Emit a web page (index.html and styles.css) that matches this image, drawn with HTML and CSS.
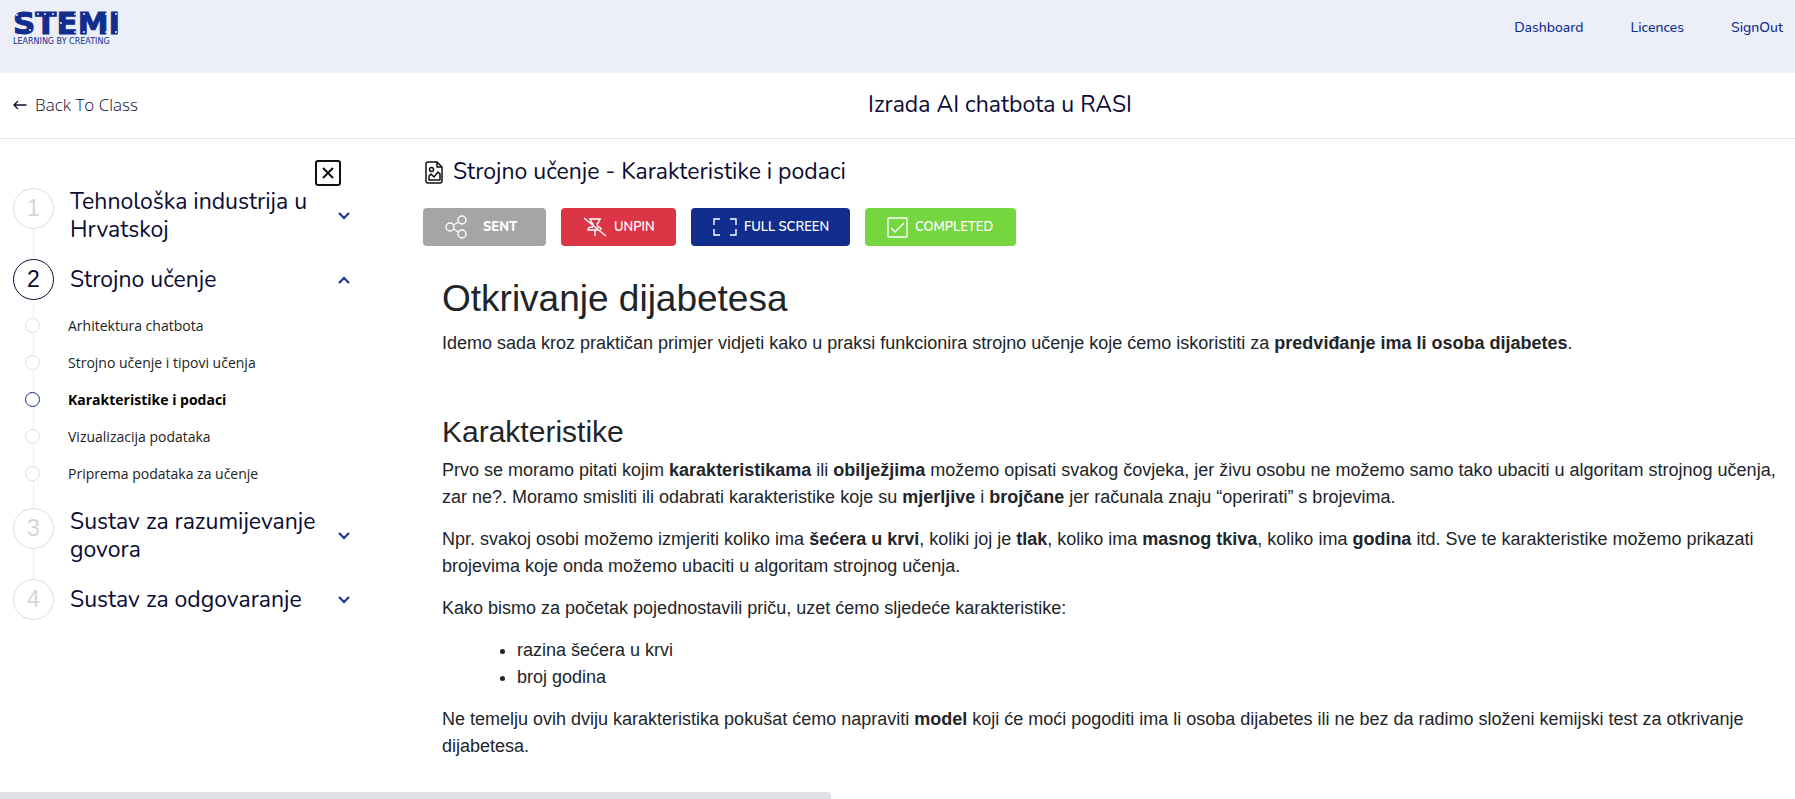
FILE: index.html
```html
<!DOCTYPE html>
<html lang="hr">
<head>
  <meta charset="UTF-8">
  <meta name="viewport" content="width=device-width, initial-scale=1.0">
  <title>Izrada AI chatbota u RASI</title>
  <link rel="stylesheet" href="styles.css">
</head>
<body>
  <header class="header">
    <a class="logo" href="#" aria-label="STEMI">
      <svg width="112" height="40" viewBox="0 0 112 40">
        <text class="logo-name" x="0" y="25">STEMI</text>
        <text class="logo-tag" x="0" y="35">LEARNING BY CREATING</text>
        <g fill="#eceff7">
          <circle cx="4" cy="6" r="1"/>
          <circle cx="17" cy="21" r="1"/>
          <circle cx="25" cy="5" r="1"/>
          <circle cx="32" cy="5" r="1"/>
          <circle cx="40" cy="5" r="1"/>
          <circle cx="48" cy="14" r="1"/>
          <circle cx="62" cy="5" r="1"/>
          <circle cx="62" cy="23" r="1"/>
          <circle cx="71" cy="5" r="1"/>
          <circle cx="71" cy="23" r="1"/>
          <circle cx="93" cy="5" r="1"/>
          <circle cx="93" cy="23" r="1"/>
          <circle cx="103" cy="5" r="1"/>
          <circle cx="103" cy="23" r="1"/>
        </g>
      </svg>
    </a>
    <nav class="menu">
      <a href="#">Dashboard</a>
      <a href="#">Licences</a>
      <a href="#">SignOut</a>
    </nav>
  </header>

  <div class="topbar">
    <a class="back" href="#">
      <svg width="14" height="10" viewBox="0 0 14 10" fill="none" stroke="currentColor" stroke-width="1.3"><path d="M13.5 5H1M5 1L1 5l4 4"/></svg>
      Back To Class
    </a>
    <h1 class="course">Izrada AI chatbota u RASI</h1>
  </div>

  <div class="layout">
    <aside class="sidebar">
      <button class="close" type="button" aria-label="Close">
        <svg width="12" height="12" viewBox="0 0 12 12" stroke="currentColor" stroke-width="2"><path d="M1 1l10 10M11 1L1 11"/></svg>
      </button>
      <div class="steps">
        <button class="step" type="button">
          <span class="number">1</span>
          <span class="name">Tehnološka industrija u Hrvatskoj</span>
          <svg class="arrow" width="12" height="8" viewBox="0 0 12 8"><path d="M1 1l5 5 5-5"/></svg>
        </button>
        <button class="step active" type="button">
          <span class="number">2</span>
          <span class="name">Strojno učenje</span>
          <svg class="arrow" width="12" height="8" viewBox="0 0 12 8"><path d="M1 7l5-5 5 5"/></svg>
        </button>
        <ul class="lessons">
          <li><a href="#">Arhitektura chatbota</a></li>
          <li><a href="#">Strojno učenje i tipovi učenja</a></li>
          <li class="current"><a href="#">Karakteristike i podaci</a></li>
          <li><a href="#">Vizualizacija podataka</a></li>
          <li><a href="#">Priprema podataka za učenje</a></li>
        </ul>
        <button class="step" type="button">
          <span class="number">3</span>
          <span class="name">Sustav za razumijevanje govora</span>
          <svg class="arrow" width="12" height="8" viewBox="0 0 12 8"><path d="M1 1l5 5 5-5"/></svg>
        </button>
        <button class="step" type="button">
          <span class="number">4</span>
          <span class="name">Sustav za odgovaranje</span>
          <svg class="arrow" width="12" height="8" viewBox="0 0 12 8"><path d="M1 1l5 5 5-5"/></svg>
        </button>
      </div>
    </aside>

    <main class="content">
      <div class="lesson-title">
        <svg width="18" height="23" viewBox="0 0 18 23" fill="none" stroke="#111" stroke-width="1.5" stroke-linejoin="round"><path d="M3 1h9l5 5v14a2 2 0 0 1-2 2H3a2 2 0 0 1-2-2V3a2 2 0 0 1 2-2zM12 1v5h5"/><circle cx="6.5" cy="8.5" r="2"/><path d="M4 19v-4l2-2 3 3 4-5 2 2v6z"/></svg>
        <h2>Strojno učenje - Karakteristike i podaci</h2>
      </div>
      <div class="actions">
        <button class="btn sent" type="button">
          <svg width="22" height="24" viewBox="0 0 22 24"><circle cx="5" cy="12" r="4"/><circle cx="17" cy="5" r="4"/><circle cx="17" cy="19" r="4"/><path d="M8.500 10l5-3M8.500 14l5 3"/></svg>
          SENT
        </button>
        <button class="btn unpin" type="button">
          <svg width="24" height="20" viewBox="0 0 24 20"><path d="M1 1l22 18M6 2h12M8 2v3l2 2-1 4M16 2v3l-2 2 1 3c2 0 3 1 3 3M9 10c-3 0-4 1-4 3h11M12 13v6"/></svg>
          UNPIN
        </button>
        <button class="btn full" type="button">
          <svg width="24" height="18" viewBox="0 0 24 18"><path d="M7 1H1v6M1 11v6h6M17 1h6v6M23 11v6h-6"/></svg>
          FULL SCREEN
        </button>
        <button class="btn completed" type="button">
          <svg width="21" height="21" viewBox="0 0 21 21"><rect x="1" y="1" width="19" height="19" rx="1"/><path d="M4 11l4 4 9-9"/></svg>
          COMPLETED
        </button>
      </div>

      <article class="article">
        <h1>Otkrivanje dijabetesa</h1>
        <p>Idemo sada kroz praktičan primjer vidjeti kako u praksi funkcionira strojno učenje koje ćemo iskoristiti za <b>predviđanje ima li osoba dijabetes</b>.</p>
        <p><br></p>
        <h2>Karakteristike</h2>
        <p>Prvo se moramo pitati kojim <b>karakteristikama</b> ili <b>obilježjima</b> možemo opisati svakog čovjeka, jer živu osobu ne možemo samo tako ubaciti u algoritam strojnog učenja, zar ne?. Moramo smisliti ili odabrati karakteristike koje su <b>mjerljive</b> i <b>brojčane</b> jer računala znaju “operirati” s brojevima.</p>
        <p>Npr. svakoj osobi možemo izmjeriti koliko ima <b>šećera u krvi</b>, koliki joj je <b>tlak</b>, koliko ima <b>masnog tkiva</b>, koliko ima <b>godina</b> itd. Sve te karakteristike možemo prikazati brojevima koje onda možemo ubaciti u algoritam strojnog učenja.</p>
        <p>Kako bismo za početak pojednostavili priču, uzet ćemo sljedeće karakteristike:</p>
        <ul>
          <li>razina šećera u krvi</li>
          <li>broj godina</li>
        </ul>
        <p>Ne temelju ovih dviju karakteristika pokušat ćemo napraviti <b>model</b> koji će moći pogoditi ima li osoba dijabetes ili ne bez da radimo složeni kemijski test za otkrivanje dijabetesa.</p>
      </article>
    </main>
  </div>
  <div class="bottom-bar"></div>
</body>
</html>
```
FILE: styles.css
```css
* {
  box-sizing: border-box;
}
body {
  margin: 0;
  background: #fff;
  color: #212529;
  font-family: "Nunito", "Lato", sans-serif;
}
a {
  text-decoration: none;
}
h1, h2, p, ul {
  margin: 0;
  font-weight: 400;
}
button {
  font-family: inherit;
  cursor: pointer;
}
.header {
  display: flex;
  justify-content: space-between;
  align-items: flex-start;
  height: 73px;
  padding: 9px 12px 0 13px;
  background: #eceff7;
}
.logo svg {
  overflow: visible;
}
.logo-name {
  font: bold 31px "DejaVu Sans", sans-serif;
  fill: #112d8e;
  stroke: #112d8e;
  stroke-width: 1;
}
.logo-tag {
  font: 8px "DejaVu Sans", sans-serif;
  fill: #112d8e;
}
.menu {
  display: flex;
  gap: 47px;
  padding-top: 9px;
}
.menu a {
  font-size: 14px;
  font-weight: 500;
  line-height: 20px;
  color: #112d8e;
}
.topbar {
  display: grid;
  grid-template-columns: 192px 1fr;
  align-items: center;
  height: 66px;
  padding: 0 0 2px 13px;
  border-bottom: 1px solid #e5e6e8;
}
.back {
  display: flex;
  align-items: center;
  gap: 8px;
  font: 300 17px "Open Sans", sans-serif;
  color: #0b0b33;
}
.course {
  font-size: 23px;
  text-align: center;
  color: #0b0b33;
}
.layout {
  display: flex;
}
.sidebar {
  flex: none;
  width: 350px;
  padding: 21px 0 0 13px;
}
.close {
  display: flex;
  align-items: center;
  justify-content: center;
  width: 26px;
  height: 26px;
  margin: 0 9px 2px auto;
  padding: 0;
  border: 2px solid #111;
  border-radius: 3px;
  background: #fff;
  color: #111;
}
/* vertical line that runs behind the circles */
.steps {
  background: linear-gradient(#eee, #eee) 20px 0 / 1px 100% no-repeat;
}
.step {
  display: flex;
  align-items: center;
  width: 100%;
  margin-bottom: 15px;
  padding: 0;
  border: none;
  background: none;
  text-align: left;
}
.step:last-child {
  margin-bottom: 0;
}
.number {
  align-self: flex-start;
  flex: none;
  width: 41px;
  height: 41px;
  border: 1px solid #dcdde0;
  border-radius: 50%;
  background: #fff;
  font: 23px/38px "Liberation Sans", sans-serif;
  text-align: center;
  color: #d4d6da;
}
.active .number {
  border-color: #0b0b33;
  color: #0b0b33;
}
.name {
  flex: 1;
  padding: 0 8px 0 16px;
  font-size: 23px;
  line-height: 28px;
  color: #0b0b33;
}
.arrow {
  fill: none;
  stroke: #112d8e;
  stroke-width: 2;
}
.lessons {
  margin: -8px 0 16px;
  padding: 0 0 0 12px;
  list-style: none;
}
.lessons li {
  display: flex;
  align-items: center;
  height: 37px;
}
.lessons li::before {
  content: "";
  width: 13px;
  height: 13px;
  margin-right: 28px;
  border: 1px solid #dcdde0;
  border-radius: 50%;
  background: #fff;
}
.lessons a {
  font: 14px "Open Sans", sans-serif;
  color: #222;
}
.lessons .current::before {
  border-color: #112d8e;
}
.lessons .current a {
  font-weight: 700;
  color: #000;
}
.content {
  flex: 1;
  padding: 19px 15px 30px 73px;
}
.lesson-title {
  display: flex;
  align-items: center;
  gap: 10px;
  padding-left: 2px;
}
.lesson-title h2 {
  font-size: 23px;
  line-height: 28px;
  color: #0b0b33;
}
.actions {
  display: flex;
  gap: 15px;
  margin-top: 22px;
}
.btn {
  display: flex;
  align-items: center;
  gap: 7px;
  height: 38px;
  padding: 0 0 0 22px;
  border: none;
  border-radius: 4px;
  font-size: 13px;
  font-weight: 600;
  color: #fff;
}
.btn svg {
  fill: none;
  stroke: #fff;
  stroke-width: 1.4;
}
.sent {
  width: 123px;
  gap: 16px;
  font-weight: 800;
  background: #a5a5a5;
}
.unpin {
  width: 115px;
  background: #dc3545;
}
.full {
  width: 159px;
  background: #112d8e;
}
.completed {
  width: 151px;
  background: #76d63f;
}
.article {
  padding: 30px 0 0 19px;
  font: 18px/27px "Liberation Sans", Arial, sans-serif;
}
.article h1 {
  margin-bottom: 8px;
  font-size: 37px;
  line-height: 46px;
}
.article h2 {
  margin-bottom: 7px;
  font-size: 30px;
  line-height: 36px;
}
.article p, .article ul {
  margin-bottom: 15px;
}
.article ul {
  padding-left: 75px;
}
.bottom-bar {
  position: fixed;
  left: 0;
  bottom: 0;
  width: 46.3%;
  height: 7px;
  border-top-right-radius: 4px;
  background: #dfe0e6;
}
```
